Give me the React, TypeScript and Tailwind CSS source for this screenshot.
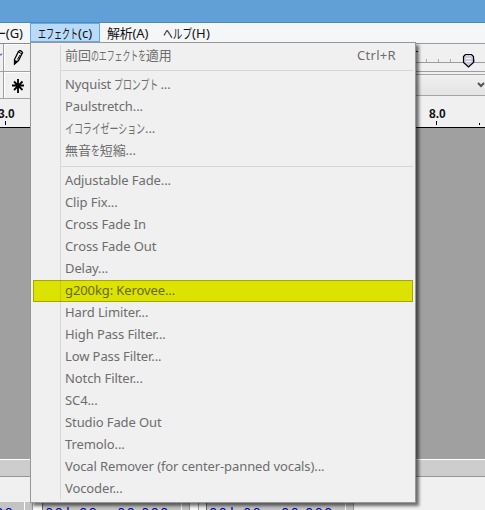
import type { ReactNode } from 'react'

interface MenuItem {
  label: ReactNode
  shortcut?: string
  highlighted?: boolean
}

// Narrow kana, as in the Windows UI font
function Kana({ children, width, scale = 'scale-x-[0.69]' }: { children: string; width: string; scale?: string }) {
  return (
    <span className={`inline-block whitespace-nowrap ${width}`}>
      <span className={`inline-block origin-left ${scale}`}>{children}</span>
    </span>
  )
}

const groups: MenuItem[][] = [
  [
    {
      label: (
        <>
          前回
          <Kana width="w-[55px]" scale="scale-x-[0.61]">
            のエフェクトを
          </Kana>
          適用
        </>
      ),
      shortcut: 'Ctrl+R',
    },
  ],
  [
    {
      label: (
        <>
          Nyquist <Kana width="w-[46px]">プロンプト</Kana>...
        </>
      ),
    },
    { label: 'Paulstretch...' },
    {
      label: (
        <>
          <Kana width="w-[80px]">イコライゼーション</Kana>...
        </>
      ),
    },
    {
      label: (
        <>
          無音
          <Kana width="w-[9px]">を</Kana>
          短縮...
        </>
      ),
    },
  ],
  [
    { label: 'Adjustable Fade...' },
    { label: 'Clip Fix...' },
    { label: 'Cross Fade In' },
    { label: 'Cross Fade Out' },
    { label: 'Delay...' },
    { label: 'g200kg: Kerovee...', highlighted: true },
    { label: 'Hard Limiter...' },
    { label: 'High Pass Filter...' },
    { label: 'Low Pass Filter...' },
    { label: 'Notch Filter...' },
    { label: 'SC4...' },
    { label: 'Studio Fade Out' },
    { label: 'Tremolo...' },
    { label: 'Vocal Remover (for center-panned vocals)...' },
    { label: 'Vocoder...' },
  ],
]

function MenuRow({ item }: { item: MenuItem }) {
  return (
    <div
      className={`flex h-[22px] items-start whitespace-nowrap border pl-[31px] pr-[16px] leading-[18px] ${
        item.highlighted ? 'border-[#a3a700] bg-[#dce300] text-[#68680c]' : 'border-transparent'
      }`}
    >
      <span>{item.label}</span>
      {item.shortcut && <span className="ml-auto tracking-[0.3px]">{item.shortcut}</span>}
    </div>
  )
}

function EffectMenu() {
  return (
    <div className="absolute left-[30px] top-[42px] flex h-[461px] w-[386px] flex-col border border-[#979797] bg-[#f0f0f0] px-[2px] pt-[2px] text-[13px] tracking-[-0.1px] text-[#6d6d6d] shadow-[3px_3px_3px_rgba(0,0,0,0.55)]">
      {groups.map((items, i) => (
        <div key={i}>
          {i > 0 && (
            <div className={`pl-[28px] ${i === 1 ? 'h-[7px] pt-[3px]' : 'h-[8px] pt-[4px]'}`}>
              <div className="h-px bg-[#d7d7d7]" />
            </div>
          )}
          {items.map((item, j) => (
            <MenuRow key={j} item={item} />
          ))}
        </div>
      ))}
      <div className="pointer-events-none absolute bottom-[2px] left-[29px] top-[2px] w-px bg-black/10" />
    </div>
  )
}

function MenuBar() {
  return (
    <div className="flex h-5 shrink-0 whitespace-nowrap bg-[#f5f6f7] text-[13px] leading-[20px] text-[#111]">
      <div className="flex w-[30px] shrink-0 justify-end pr-[7px]">
        <Kana width="w-[9px]">ー</Kana>(G)
      </div>
      <div className="flex h-[19px] w-[70px] items-center border border-[#67a7e2] bg-[#b9daf8] pl-[7px]">
        <Kana width="w-[40px]" scale="scale-x-[0.615]">
          エフェクト
        </Kana>
        (c)
      </div>
      <div className="ml-[7px] w-[55px] tracking-[-0.2px]">解析(A)</div>
      <div className="pl-px tracking-[0.2px]">
        <Kana width="w-[29px]" scale="scale-x-[0.74]">
          ヘルプ
        </Kana>
        (H)
      </div>
    </div>
  )
}

function ToolButtons() {
  return (
    <div className="w-[30px] border-t border-[#8c8c8c]">
      <div className="flex h-[28px] border-b border-[#a0a0a0]">
        <div className="w-[4px] border-r border-[#a0a0a0]">
          <svg width="3" height="27" viewBox="0 0 3 27">
            <path d="M0 11l2-1" stroke="#6868e0" strokeWidth="1.5" />
          </svg>
        </div>
        <div className="flex-1 border-l border-t border-white">
          <svg width="25" height="26" viewBox="0 0 25 26">
            <path d="M9.500 14.500L13.500 6.500Q15.500 4.500 17.500 7.500L13.500 15.500L9.500 19Z" fill="#f4f4f4" stroke="#000" strokeWidth="1.3" />
            <path d="M9.500 15.500l3 1-3 2.500zM13.500 7l3.500 2M15 10l-2.500 4.500" fill="#000" stroke="#000" />
          </svg>
        </div>
      </div>
      <div className="flex h-[28px] border-b-2 border-[#a6a6a6]">
        <div className="w-[4px] border-r border-[#a0a0a0]" />
        <div className="flex-1 border-l border-t border-white">
          <svg width="25" height="25" viewBox="0 0 25 25">
            <path d="M13 6v14M7 12.500h12M9 8.500l8.500 8.500M17.500 8.500l-8.500 8.500" stroke="#000" strokeWidth="1.8" />
          </svg>
        </div>
      </div>
    </div>
  )
}

function SpeedToolbar() {
  return (
    <div className="w-[69px]">
      <div className="h-[29px] border-b border-t border-[#9c9c9c]">
        <svg width="69" height="27" viewBox="0 0 69 27">
          <path d="M0 7.500h2" stroke="#111" />
          <path d="M10.500 15v3M22.500 15v3M34.500 15v3M58.500 15v3" stroke="#aaa" />
          <path d="M0 18.500h69" stroke="#9b9b9b" />
          <path d="M49.500 10.500L47.500 12.500V18.500L52.500 23L57.500 18.500V12.500L55.500 10.500Z" fill="#c9c9e6" stroke="#000" strokeWidth="1.200" />
          <path d="M50 14.500h5M50 17.500h5" stroke="#fff" />
        </svg>
      </div>
      <div className="mt-[2px] flex h-[22px] items-center justify-end border-y border-[#a5a5a5] bg-gradient-to-b from-[#f0f0f0] to-[#e4e4e4]">
        <svg width="8" height="8" viewBox="0 0 8 8">
          <path d="M1 2l3 3 3-3" fill="none" stroke="#555" strokeWidth="2" />
        </svg>
      </div>
      <div className="mt-[3px] h-px bg-[#a0a0a0]" />
    </div>
  )
}

function Ruler() {
  return (
    <div className="flex h-[29px] shrink-0 justify-between overflow-hidden border-b border-black bg-[#f0f0f0] font-['Liberation_Sans'] text-[12px] font-bold leading-[30px] text-[#111]">
      <div className="relative w-[30px]">
        <span className="ml-[-2px]">3.0</span>
        <div className="absolute bottom-[2px] left-[5px] h-[4px] w-px bg-black" />
      </div>
      <div className="relative w-[69px] pl-[13px]">
        8.0
        <div className="absolute bottom-[2px] left-[20px] h-[4px] w-px bg-black" />
        <div className="absolute bottom-[2px] left-[63px] h-[2px] w-px bg-black" />
      </div>
    </div>
  )
}

function FieldArrow() {
  return <div className="h-[8px] w-[9px] shrink-0 border-l border-r border-l-white border-r-[#999] bg-[#c4c4c4]" />
}

function TimeField() {
  return (
    <>
      <div className="flex h-[8px] w-[139px] shrink-0 overflow-hidden border-l border-[#666] bg-[#c4c4c4] pl-[2px]">
        <span className="w-[21px]">00</span>
        <span className="w-[13px]">h</span>
        <span className="w-[20px]">00</span>
        <span className="w-[18px]">m</span>
        <span className="w-[19px]">00</span>
        <span className="w-[5px] tracking-[-4px]">.</span>
        <span>000</span>
      </div>
      <FieldArrow />
    </>
  )
}

function SelectionBar() {
  return (
    <div className="flex h-[8px] shrink-0 overflow-hidden whitespace-pre font-['Liberation_Mono'] text-[14px] leading-[24px] tracking-[1.1px] text-[#0000b4]">
      <div className="h-[8px] w-[24px] overflow-hidden bg-[#c4c4c4]">
        <span className="ml-[-5px]">00</span>
      </div>
      <FieldArrow />
      <div className="w-[9px] bg-[#f8f8f8]" />
      <TimeField />
      <div className="w-[8px] bg-[#f8f8f8]" />
      <div className="mr-[7px] w-px bg-[#999]" />
      <TimeField />
    </div>
  )
}

export default function App() {
  return (
    <div className="relative flex h-[510px] w-[485px] flex-col overflow-hidden bg-[#f0f0f0] font-['Noto_Sans','Noto_Sans_CJK_JP',sans-serif]">
      <div className="h-[23px] shrink-0 border-b border-[#4c8ac4] bg-[#61a0d6]" />
      <MenuBar />
      <div className="flex h-[56px] shrink-0 justify-between">
        <ToolButtons />
        <SpeedToolbar />
      </div>
      <Ruler />
      <div className="h-[331px] shrink-0 bg-[#a0a0a0]" />
      <div className="h-[18px] shrink-0 border-b border-t border-b-[#969696] border-t-white bg-[#cdcdcd]" />
      <div className="h-[25px] shrink-0" />
      <SelectionBar />
      <EffectMenu />
    </div>
  )
}
